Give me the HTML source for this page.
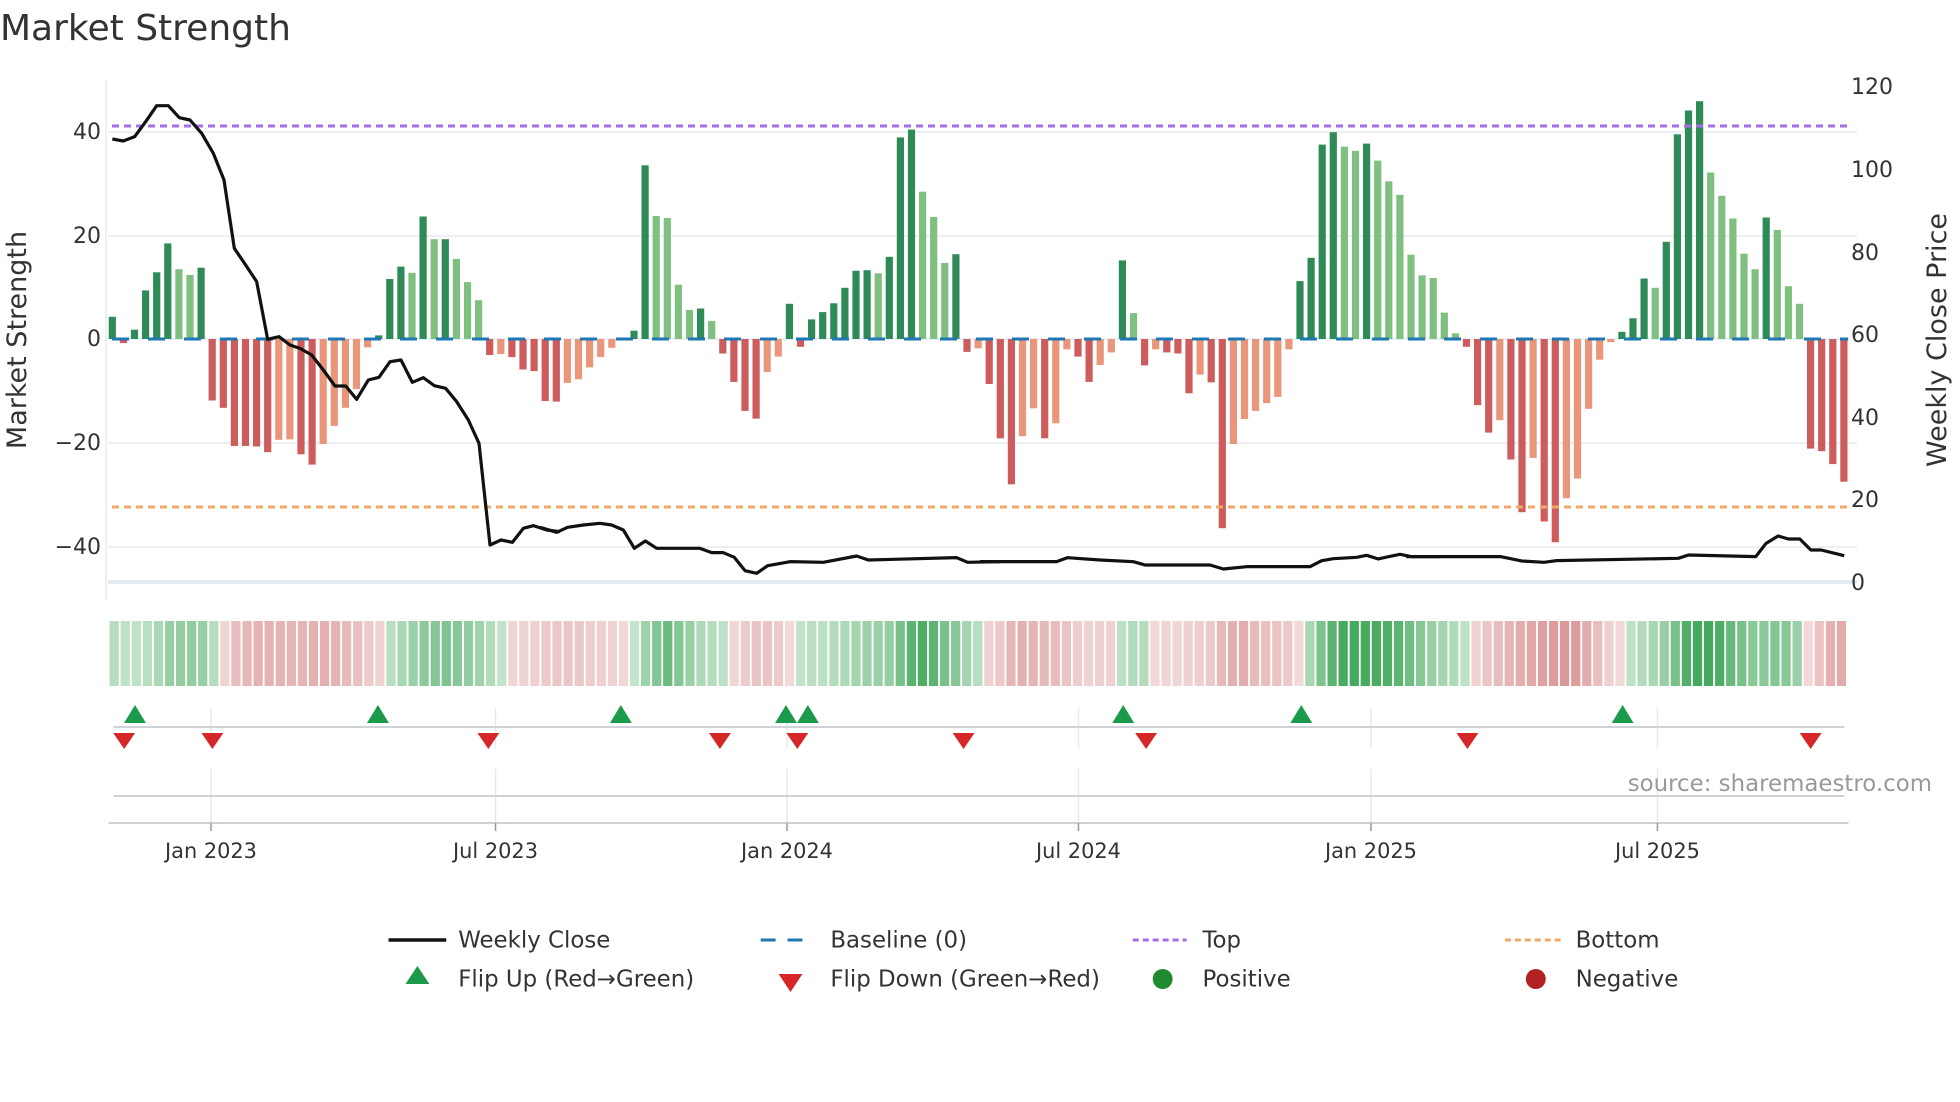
<!DOCTYPE html>
<html><head><meta charset="utf-8"><style>
html,body{margin:0;padding:0;background:#fff;}
svg{display:block;font-family:"DejaVu Sans","Liberation Sans",sans-serif;}
</style></head><body>
<svg id="s" width="1960" height="1102" viewBox="0 0 1960 1102" xmlns="http://www.w3.org/2000/svg">
<rect width="1960" height="1102" fill="#fff"/>
<text x="0" y="40" font-size="36" fill="#333">Market Strength</text>
<g stroke="#eceff3" stroke-width="2">
<line x1="108" y1="132" x2="1857" y2="132"/>
<line x1="108" y1="236" x2="1857" y2="236"/>
<line x1="108" y1="443" x2="1857" y2="443"/>
<line x1="108" y1="547" x2="1857" y2="547"/>
</g>
<line x1="106" y1="80" x2="106" y2="600" stroke="#eceff3" stroke-width="2"/>
<line x1="108" y1="582" x2="1857" y2="582" stroke="#e3ebf5" stroke-width="4"/>
<line x1="112" y1="339" x2="1850" y2="339" stroke="#e6f0f6" stroke-width="2"/>
<g id="bars"></g>
<line x1="112" y1="339" x2="1848" y2="339" stroke="#1f77b4" stroke-width="3" stroke-dasharray="17 19"/>
<line x1="112" y1="126" x2="1848" y2="126" stroke="#a56ee6" stroke-width="3" stroke-dasharray="7 5"/>
<line x1="112" y1="507" x2="1848" y2="507" stroke="#f0a868" stroke-width="3" stroke-dasharray="7 5"/>
<g fill="none" stroke="#111" stroke-width="3.2" stroke-linejoin="round">
<polyline vector-effect="non-scaling-stroke" transform="translate(100 80) scale(0.33333)" points="37,177 70,183 104,170 137,125 170,77 205,77 238,113 270,120 305,160 340,220 372,300 403,505 437,555 470,605 503,778 537,770 570,795 600,805 635,825 670,870 705,918 737,918 770,958 805,900 837,892 870,845 903,840 937,907 970,893 1003,917 1037,925 1070,965 1105,1020 1137,1090 1170,1395 1203,1380 1237,1387 1270,1345 1300,1337 1340,1350 1380,1355"/>
<polyline vector-effect="non-scaling-stroke" transform="translate(540 80) scale(0.33333)" points="0,1342 50,1357 83,1342 130,1335 180,1330 215,1335 250,1350 283,1405 316,1383 350,1405 480,1405 515,1418 550,1418 583,1432 615,1472 650,1480 683,1457 750,1445 850,1447 950,1428 985,1440 1250,1433 1283,1447 1380,1445"/>
<polyline vector-effect="non-scaling-stroke" transform="translate(980 80) scale(0.33333)" points="0,1445 230,1445 263,1433 360,1440 460,1445 495,1455 690,1455 730,1467 800,1460 990,1460 1025,1442 1060,1436 1130,1432 1160,1426 1195,1437 1225,1430 1260,1423 1295,1430 1380,1430"/>
<polyline vector-effect="non-scaling-stroke" transform="translate(1420 80) scale(0.34435 0.33333)" points="-40,1430 235,1430 295,1443 360,1447 395,1442 750,1435 780,1425 975,1430 1005,1390 1040,1368 1070,1377 1103,1377 1135,1410 1165,1410 1232,1427"/>
</g>
<g font-size="22" fill="#333" text-anchor="end" dominant-baseline="middle">
<text x="101" y="133">40</text><text x="101" y="237">20</text><text x="101" y="340">0</text>
<text x="101" y="444">−20</text><text x="101" y="548">−40</text>
</g>
<text transform="translate(26 340) rotate(-90)" text-anchor="middle" font-size="27" fill="#333">Market Strength</text>
<g font-size="22" fill="#333" dominant-baseline="middle">
<text x="1851" y="88">120</text><text x="1851" y="171">100</text><text x="1851" y="254">80</text>
<text x="1851" y="336">60</text><text x="1851" y="419">40</text><text x="1851" y="501">20</text><text x="1851" y="584">0</text>
</g>
<text transform="translate(1946 340) rotate(-90)" text-anchor="middle" font-size="27" fill="#333">Weekly Close Price</text>
<g transform="translate(1.1 -4) scale(0.9948 1)">
<g id="heat"></g>
<g stroke="#e6e9ee" stroke-width="1.5">
<line x1="211" y1="712" x2="211" y2="752"/><line x1="497" y1="712" x2="497" y2="752"/><line x1="790" y1="712" x2="790" y2="752"/><line x1="1083" y1="712" x2="1083" y2="752"/><line x1="1377" y1="712" x2="1377" y2="752"/><line x1="1665" y1="712" x2="1665" y2="752"/>
<line x1="211" y1="773" x2="211" y2="827"/><line x1="497" y1="773" x2="497" y2="827"/><line x1="790" y1="773" x2="790" y2="827"/><line x1="1083" y1="773" x2="1083" y2="827"/><line x1="1377" y1="773" x2="1377" y2="827"/><line x1="1665" y1="773" x2="1665" y2="827"/>
</g>
<line x1="113" y1="731" x2="1853" y2="731" stroke="#cfd2d6" stroke-width="2"/>
<line x1="113" y1="800" x2="1853" y2="800" stroke="#cfd2d6" stroke-width="2"/>
<line x1="108" y1="827" x2="1857" y2="827" stroke="#cfd2d6" stroke-width="2"/>
<g stroke="#999" stroke-width="1.5">
<line x1="211" y1="827" x2="211" y2="835"/><line x1="497" y1="827" x2="497" y2="835"/><line x1="790" y1="827" x2="790" y2="835"/><line x1="1083" y1="827" x2="1083" y2="835"/><line x1="1377" y1="827" x2="1377" y2="835"/><line x1="1665" y1="827" x2="1665" y2="835"/>
</g>
<g id="marks"></g>
<text x="1941" y="795" text-anchor="end" font-size="23" fill="#999">source: sharemaestro.com</text>
<g font-size="21" fill="#333" text-anchor="middle">
<text x="211" y="862">Jan 2023</text><text x="497" y="862">Jul 2023</text><text x="790" y="862">Jan 2024</text>
<text x="1083" y="862">Jul 2024</text><text x="1377" y="862">Jan 2025</text><text x="1665" y="862">Jul 2025</text>
</g>
</g>
<g transform="translate(1.5 -5) scale(0.995 1)">
<line x1="389" y1="945" x2="447" y2="945" stroke="#111" stroke-width="3.5"/>
<line x1="763" y1="945" x2="817" y2="945" stroke="#1f77b4" stroke-width="3" stroke-dasharray="15 12"/>
<line x1="1137" y1="945" x2="1191" y2="945" stroke="#a56ee6" stroke-width="3" stroke-dasharray="6 4"/>
<line x1="1511" y1="945" x2="1567" y2="945" stroke="#f0a868" stroke-width="3" stroke-dasharray="6 4"/>
<polygon points="418,971 406,989 430,989" fill="#1a9a4a"/>
<polygon points="793,997 781,979 805,979" fill="#d62728"/>
<circle cx="1167" cy="984" r="10" fill="#1f8a2e"/>
<circle cx="1542" cy="984" r="10" fill="#b22222"/>
<g font-size="23" fill="#333" dominant-baseline="middle">
<text x="459" y="946">Weekly Close</text><text x="833" y="946">Baseline (0)</text><text x="1207" y="946">Top</text><text x="1582" y="946">Bottom</text>
<text x="459" y="985">Flip Up (Red→Green)</text><text x="833" y="985">Flip Down (Green→Red)</text><text x="1207" y="985">Positive</text><text x="1582" y="985">Negative</text>
</g>
</g>
</svg>
<script>
var raw="4.3d,-0.8d,1.8d,9.4d,12.9d,18.5d,13.5l,12.4l,13.8d,-11.9d,-13.3d,-20.7d,-20.7d,-20.8d,-21.9d,-19.5l,-19.4l,-22.3d,-24.3d,-20.3l,-16.8l,-13.3l,-9.7l,-1.6l,0.7d,11.6d,14d,12.8l,23.7d,19.3l,19.3d,15.5l,11l,7.5l,-3.1d,-2.9l,-3.5d,-5.9d,-6.2d,-12d,-12.1d,-8.5l,-7.8l,-5.5l,-3.5l,-1.7l,0.2d,1.6d,33.6d,23.8l,23.4l,10.5l,5.6l,5.9d,3.5l,-2.8d,-8.3d,-13.9d,-15.4d,-6.4l,-3.4l,6.8d,-1.5d,3.8d,5.2d,6.9d,9.9d,13.2d,13.3d,12.7l,15.9d,39d,40.5d,28.5l,23.6l,14.7l,16.4d,-2.5d,-1.8l,-8.7d,-19.2d,-28.1d,-18.8l,-13.4l,-19.2d,-16.3l,-2l,-3.4d,-8.3d,-5l,-2.6l,15.2d,5l,-5.1d,-2l,-2.6d,-2.8d,-10.5d,-6.9l,-8.4d,-36.6d,-20.3l,-15.5l,-13.9l,-12.4l,-11.2l,-2l,11.2d,15.7d,37.6d,40d,37.2l,36.4l,37.8d,34.5l,30.5l,27.9l,16.3l,12.3l,11.8l,5.1l,1.1l,-1.5d,-12.8d,-18.1d,-15.7l,-23.3d,-33.5d,-23l,-35.3d,-39.3d,-30.8l,-27l,-13.5l,-4l,-0.6l,1.4d,4d,11.7d,9.9l,18.8d,39.6d,44.2d,46d,32.2l,27.7l,23.3l,16.5l,13.5l,23.5d,21.1l,10.2l,6.8l,-21.2d,-21.7d,-24.2d,-27.6d".split(",");
var NS="http://www.w3.org/2000/svg",bars=document.getElementById("bars"),heat=document.getElementById("heat"),marks=document.getElementById("marks");
function el(p,t,a){var e=document.createElementNS(NS,t);for(var k in a)e.setAttribute(k,a[k]);p.appendChild(e);return e;}
var vals=raw.map(function(s){return parseFloat(s);});
raw.forEach(function(s,i){var v=vals[i],d=s.slice(-1)=="d";var x=112.3+i*11.1-3.6;var h=Math.abs(v)*5.17;
var c=v>=0?(d?"#2e8b57":"#7fbf7f"):(d?"#cd5c5c":"#e9967a");
el(bars,"rect",{x:x.toFixed(1),y:(v>=0?339-h:339).toFixed(1),width:7.2,height:h.toFixed(1),fill:c});});
function mix(a,t){return "rgb("+a.map(function(c){return Math.round(255+(c-255)*t);}).join(",")+")";}
for(var i=0;i<vals.length;i++){var s=0,n=0;for(var j=i-2;j<=i;j++){if(j>=0){s+=vals[j];n++;}}s/=n;var m=Math.min(1,Math.abs(s)/38);
var c=s>=0?mix([60,165,85],0.3+0.65*m):mix([205,110,110],0.25+0.5*m);
el(heat,"rect",{x:(109+i*11.13).toFixed(1),y:625,width:9.3,height:65,fill:c});}
[134.6,378.8,623,789,811,1128,1307,1630].forEach(function(x){el(marks,"polygon",{points:(x)+",709 "+(x-11)+",727 "+(x+11)+",727",fill:"#1a9a4a"});});
[123.7,212.4,489.8,722.6,800.4,967.5,1151,1474,1819].forEach(function(x){el(marks,"polygon",{points:(x)+",753 "+(x-11)+",737 "+(x+11)+",737",fill:"#d62728"});});
</script>
</body></html>
